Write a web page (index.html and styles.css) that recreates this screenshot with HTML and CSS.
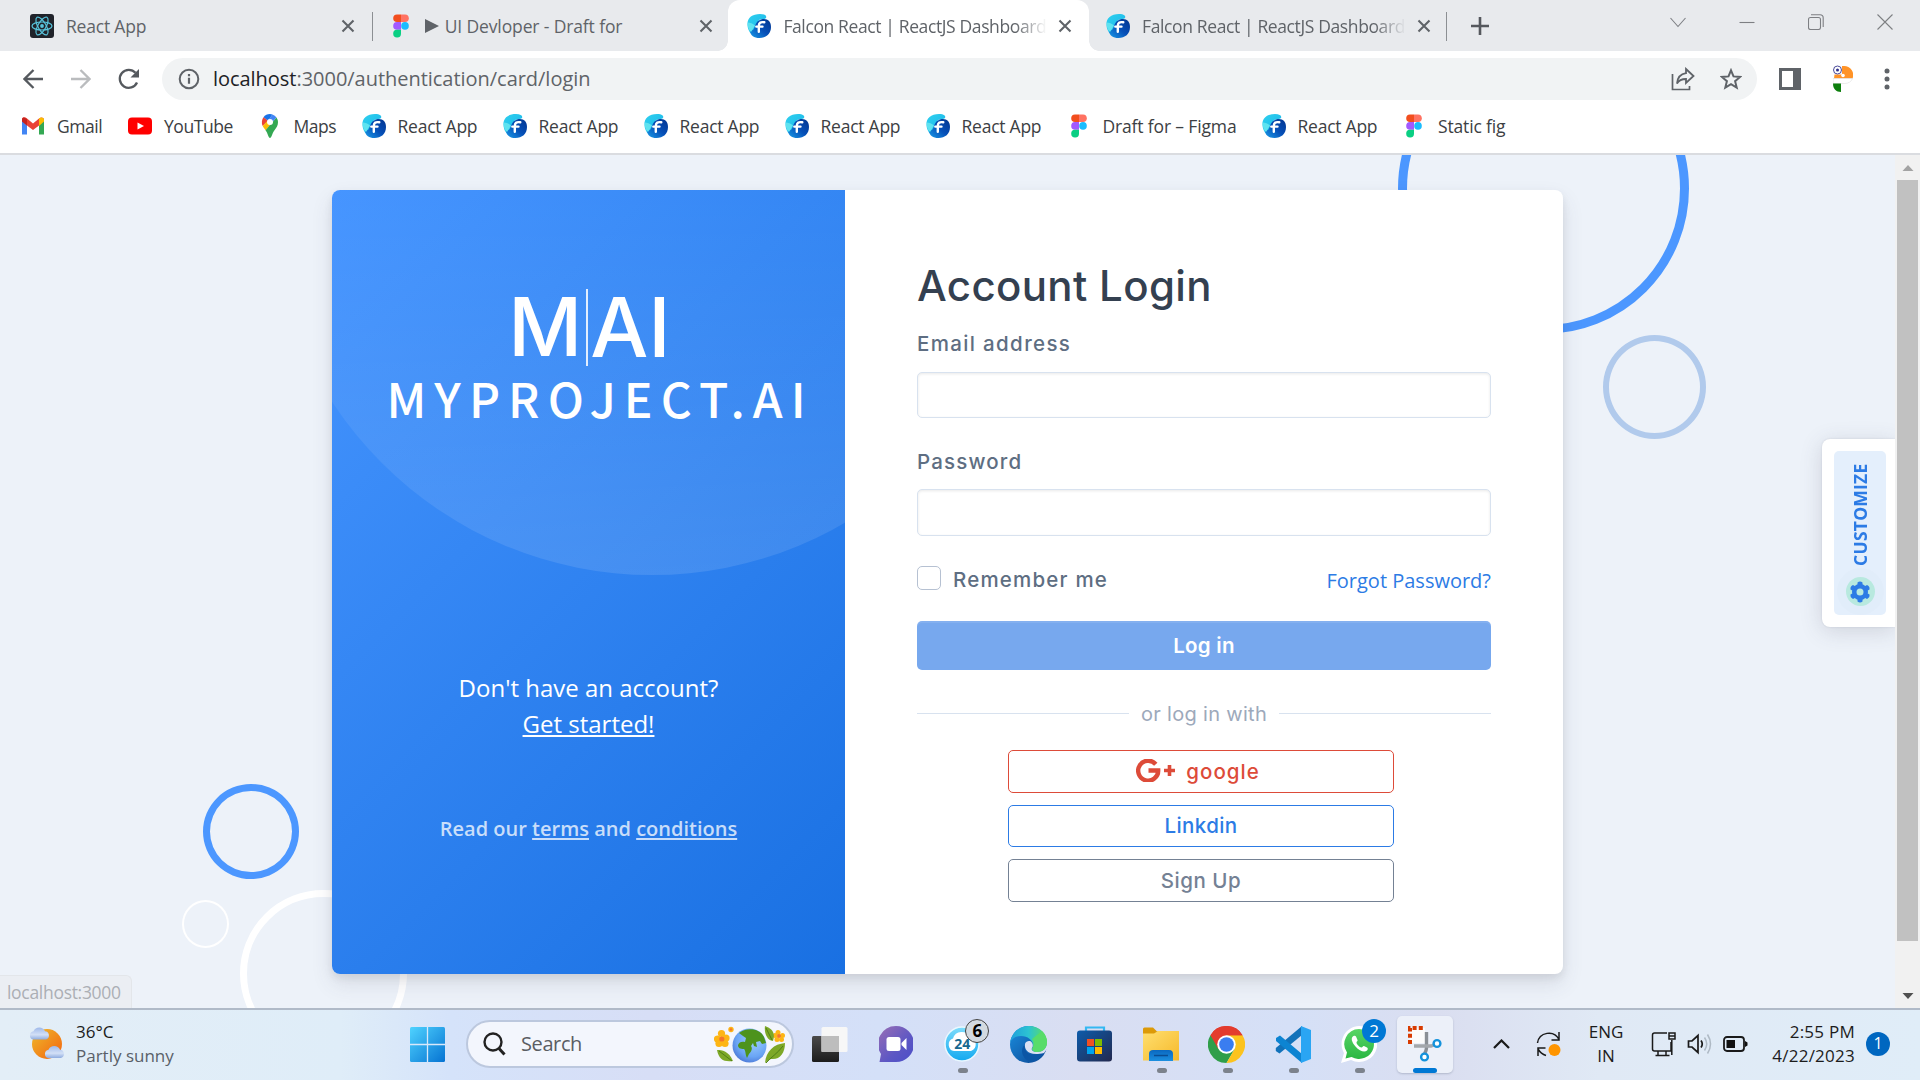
FILE: index.html
```html
<!DOCTYPE html>
<html lang="en">
<head>
<meta charset="utf-8">
<title>Falcon React | ReactJS Dashboard</title>
<link rel="stylesheet" href="styles.css">
</head>
<body>
<svg class="defs" width="0" height="0">
  <defs>
    <linearGradient id="fg-a" x1="0" y1="0" x2="1" y2="1"><stop offset="0" stop-color="#2fd0ee"/><stop offset="1" stop-color="#19b5ea"/></linearGradient>
    <linearGradient id="fg-b" x1="1" y1="0" x2="0" y2="1"><stop offset="0" stop-color="#02348f"/><stop offset=".5" stop-color="#0650b8"/><stop offset="1" stop-color="#1a9be8"/></linearGradient>
    <linearGradient id="win" x1="0" y1="0" x2="1" y2="1"><stop offset="0" stop-color="#4fd3ff"/><stop offset="1" stop-color="#0673d2"/></linearGradient>
    <linearGradient id="sun" x1="0" y1="0" x2="1" y2="1"><stop offset="0" stop-color="#eebb2c"/><stop offset="1" stop-color="#f4620e"/></linearGradient>
    <linearGradient id="cloud" x1="0" y1="0" x2="0" y2="1"><stop offset="0" stop-color="#9fb9ea"/><stop offset=".6" stop-color="#d3e0f6"/><stop offset="1" stop-color="#8facdf"/></linearGradient>
    <linearGradient id="chat" x1="0" y1="0" x2="1" y2="1"><stop offset="0" stop-color="#9b6fb4"/><stop offset=".6" stop-color="#5d57c4"/><stop offset="1" stop-color="#4a4ec8"/></linearGradient>
    <linearGradient id="sky" x1="0" y1="0" x2="0" y2="1"><stop offset="0" stop-color="#7edcfb"/><stop offset="1" stop-color="#12a9f0"/></linearGradient>
    <linearGradient id="edge-a" x1="0" y1="0" x2="1" y2="0"><stop offset="0" stop-color="#1f9fdc"/><stop offset=".5" stop-color="#2cc3d2"/><stop offset="1" stop-color="#5ee05a"/></linearGradient>
    <linearGradient id="edge-b" x1="0" y1="0" x2="1" y2="1"><stop offset="0" stop-color="#1b8fe0"/><stop offset="1" stop-color="#0c4591"/></linearGradient>
    <linearGradient id="store" x1="0" y1="0" x2="1" y2="1"><stop offset="0" stop-color="#0d5cab"/><stop offset="1" stop-color="#23294f"/></linearGradient>
    <linearGradient id="folder" x1="0" y1="0" x2="1" y2="1"><stop offset="0" stop-color="#ffdf70"/><stop offset="1" stop-color="#f6b92a"/></linearGradient>
    <linearGradient id="tray-blue" x1="0" y1="0" x2="0" y2="1"><stop offset="0" stop-color="#0a68c0"/><stop offset="1" stop-color="#1c8fe0"/></linearGradient>
    <linearGradient id="dark" x1="0" y1="0" x2="0" y2="1"><stop offset="0" stop-color="#4a4a4a"/><stop offset="1" stop-color="#1c1c1c"/></linearGradient>
    <radialGradient id="globe" cx=".6" cy=".35" r=".8"><stop offset="0" stop-color="#9fd0ff"/><stop offset=".6" stop-color="#6aa5f5"/><stop offset="1" stop-color="#3f63c8"/></radialGradient>
    <linearGradient id="wa" x1="0" y1="0" x2="0" y2="1"><stop offset="0" stop-color="#59d566"/><stop offset="1" stop-color="#2bb742"/></linearGradient>
  </defs>
  <symbol id="falcon" viewBox="0 0 24 24">
    <path d="M.5 11C0 4 5 0 13 0c5 0 7 2 6 4-1 1.500-4 .8-7 2l-4 9 1 7C4 21 .8 17 .5 11z" fill="url(#fg-a)"/>
    <path d="M14 5.500c6-1.500 10 1.500 10 7.500 0 7-5 11-11.500 11-5.500 0-9-2.500-9.500-7 3-.5 4-1.500 5-5 1-3.500 3-5.500 6-6.500z" fill="url(#fg-b)"/>
    <path d="M.8 8.500C3 8.500 6 9.500 8 11.500l-4 6.500C1.500 16 .2 12 .8 8.500z" fill="#5fe3f0"/>
    <path d="M17.300 8.300c-4-.8-5.500.8-5.500 3.800v5.700M9.300 12.600h6.200" fill="none" stroke="#fff" stroke-width="2.400" stroke-linecap="round"/>
  </symbol>
  <symbol id="figma" viewBox="0 0 24 24">
    <path d="M8 .5h4v7.600H8a3.800 3.800 0 0 1 0-7.600z" fill="#f24e1e"/><path d="M12 .5h4a3.800 3.800 0 0 1 0 7.600h-4z" fill="#ff7262"/>
    <path d="M8 8.100h4v7.600H8a3.800 3.800 0 0 1 0-7.600z" fill="#a259ff"/><circle cx="16" cy="11.900" r="3.800" fill="#1abcfe"/>
    <path d="M8 15.700h4v3.800a3.900 3.900 0 1 1-4-3.800z" fill="#0acf83"/>
  </symbol>
  <symbol id="close" viewBox="0 0 14 14"><path d="M1.500 1.500l11 11M12.500 1.500l-11 11" stroke="#5f6368" stroke-width="2.100"/></symbol>
</svg>

<div class="screen">
  <header class="tabs">
    <div class="tab">
      <svg class="fav" viewBox="0 0 24 24"><rect width="24" height="24" rx="3" fill="#20232a"/><g fill="none" stroke="#58c4dc" stroke-width="1.200"><ellipse cx="12" cy="12" rx="10" ry="4"/><ellipse cx="12" cy="12" rx="10" ry="4" transform="rotate(60 12 12)"/><ellipse cx="12" cy="12" rx="10" ry="4" transform="rotate(120 12 12)"/></g><circle cx="12" cy="12" r="1.900" fill="#58c4dc"/></svg>
      <span class="tab-title">React App</span><svg class="x"><use href="#close"/></svg>
    </div>
    <div class="tab divided">
      <svg class="fav"><use href="#figma"/></svg>
      <span class="tab-title figma-title"><svg width="14" height="14" viewBox="0 0 14 14"><path d="M0 0l14 7-14 7z" fill="#5f6368"/></svg>UI Devloper - Draft for</span><svg class="x"><use href="#close"/></svg>
    </div>
    <div class="tab active">
      <svg class="fav"><use href="#falcon"/></svg>
      <span class="tab-title long">Falcon React | ReactJS Dashboard</span><svg class="x"><use href="#close"/></svg>
    </div>
    <div class="tab">
      <svg class="fav"><use href="#falcon"/></svg>
      <span class="tab-title long">Falcon React | ReactJS Dashboard</span><svg class="x"><use href="#close"/></svg>
    </div>
    <div class="new-tab divided"><svg width="18" height="18" viewBox="0 0 18 18"><path d="M9 0v18M0 9h18" stroke="#55585d" stroke-width="2.600"/></svg></div>
    <div class="window-buttons">
      <svg width="16" height="16" viewBox="0 0 16 16"><path d="M.5 4L8 12.500 15.500 4"/></svg>
      <svg width="16" height="16" viewBox="0 0 16 16"><path d="M.5 8.500h15"/></svg>
      <svg width="16" height="16" viewBox="0 0 16 16"><rect x=".5" y="3.500" width="12" height="12" rx="2"/><path d="M3 .8h9a3.200 3.200 0 0 1 3.200 3.200v9"/></svg>
      <svg width="16" height="16" viewBox="0 0 16 16"><path d="M.5.5l15 15M15.500.5l-15 15"/></svg>
    </div>
  </header>

  <div class="toolbar">
    <div class="nav">
      <svg width="20" height="20" viewBox="0 0 20 20"><path d="M20 10H2M10.500 1L1.500 10l9 9" stroke="#55595e"/></svg>
      <svg width="20" height="20" viewBox="0 0 20 20"><path d="M0 10h18M9.500 1l9 9-9 9" stroke="#babcbe"/></svg>
      <svg width="22" height="22" viewBox="0 0 22 22"><path d="M19 14.500A9 9 0 1 1 17.500 4.800" stroke="#55595e"/><path d="M21 1v8.500h-8.500z" fill="#55595e"/></svg>
    </div>
    <div class="omnibox">
      <svg width="22" height="22" viewBox="0 0 22 22"><circle cx="11" cy="11" r="9.300" fill="none" stroke="#5f6368" stroke-width="2"/><path d="M11 9.700v6M11 6v2.200" stroke="#5f6368" stroke-width="2.200"/></svg>
      <span class="url"><b>localhost</b>:3000/authentication/card/login</span>
      <svg class="share" width="24" height="24" viewBox="0 0 24 24"><path d="M1.500 7v15.500h17V19" fill="none" stroke="#5f6368" stroke-width="1.700"/><path d="M15 2l7.500 7L15 16v-4c-4.500 0-7 1-9 4.500C6.500 10.500 9.500 7 15 6.200z" fill="none" stroke="#5f6368" stroke-width="1.800"/></svg>
      <svg width="22" height="22" viewBox="0 0 22 22"><path d="M11 2.300l2.500 6.100 6.600.5-5 4.300 1.600 6.400L11 16.100l-5.700 3.500 1.600-6.400-5-4.300 6.600-.5z" fill="none" stroke="#5f6368" stroke-width="2"/></svg>
    </div>
    <svg class="side" width="22" height="22" viewBox="0 0 22 22"><path fill-rule="evenodd" d="M0 0h22v22H0zM3 3v16h11V3z" fill="#5f6368"/></svg>
    <svg class="avatar" width="20" height="28" viewBox="0 0 20 28"><path d="M9 1h2a9 9 0 0 1 8.500 12.500H1l.5-4H9z" fill="#ff9327"/><path d="M0 13.500h19.500c-1 3-4 5-8 5H0z" fill="#fff" stroke="#ddd" stroke-width=".6"/><path d="M0 18.500h8V27c-5 0-8-3-8-8.500z" fill="#0d7f0d"/><circle cx="4.500" cy="5" r="4" fill="#fff" stroke="#4a4a9a" stroke-width="1"/><circle cx="4.500" cy="5" r="1.500" fill="#30308a"/><circle cx="10" cy="10.500" r="1.800" fill="#fff"/></svg>
    <svg width="6" height="22" viewBox="0 0 6 22"><g fill="#5f6368"><circle cx="3" cy="3" r="2.500"/><circle cx="3" cy="11" r="2.500"/><circle cx="3" cy="19" r="2.500"/></g></svg>
  </div>

  <nav class="bookmarks">
    <a><svg viewBox="0 0 24 24"><path d="M1 5.500v15h5V11z" fill="#4285f4"/><path d="M18 11v9.500h5v-15z" fill="#34a853"/><path d="M1 5.500C1 3 4 2.500 6 4.500l6 5 6-5c2-2 5-1 5 1V7l-5 4.500-6 4.500-6-4.500L1 7z" fill="#ea4335"/><path d="M18 4.500c2-2 5-1 5 1V7.500L18 12z" fill="#fbbc04"/><path d="M1 5.500C1 4 2 3.500 3 3.500L6 5v6.500L1 7.500z" fill="#c5221f"/></svg>Gmail</a>
    <a><svg viewBox="0 0 24 24"><rect y="3.500" width="24" height="17" rx="4" fill="#f00"/><path d="M9.500 8.500l6.500 3.500-6.500 3.500z" fill="#fff"/></svg>YouTube</a>
    <a><svg viewBox="0 0 24 24"><path d="M12 0a8 8 0 0 0-6.500 3.300L10 7l4.500-6.500z" fill="#1a73e8"/><path d="M5.500 3.300A8.500 8.500 0 0 0 4.700 12L10 6.800z" fill="#ea4335"/><path d="M14.500.5L9 7.800 12 11l6.500-7.500A8 8 0 0 0 14.500.5z" fill="#4285f4"/><path d="M4.700 12c.6 1.500 1.800 2.700 2.800 4.200L15 8 9.500 6.800z" fill="#fbbc04"/><path d="M7.500 16.200c2.500 3.300 3 7.800 4.500 7.800s2-4.500 4.500-7.800C18.500 13.500 20 12 20 8a9 9 0 0 0-1.500-4.500z" fill="#34a853"/><circle cx="12" cy="8" r="3" fill="#fff"/></svg>Maps</a>
    <a><svg><use href="#falcon"/></svg>React App</a>
    <a><svg><use href="#falcon"/></svg>React App</a>
    <a><svg><use href="#falcon"/></svg>React App</a>
    <a><svg><use href="#falcon"/></svg>React App</a>
    <a><svg><use href="#falcon"/></svg>React App</a>
    <a class="wide"><svg><use href="#figma"/></svg>Draft for – Figma</a>
    <a><svg><use href="#falcon"/></svg>React App</a>
    <a class="wide"><svg><use href="#figma"/></svg>Static fig</a>
  </nav>

  <main class="viewport">
    <div class="page">
      <i class="ring ring-top"></i><i class="ring ring-pale"></i><i class="ring ring-blue"></i><i class="ring ring-dot"></i><i class="ring ring-white"></i>
      <section class="card">
        <div class="brand">
          <div class="logo"><span>M</span><i></i><span>AI</span></div>
          <div class="logo-name">MYPROJECT.AI</div>
          <p class="join">Don't have an account?<br><a>Get started!</a></p>
          <p class="terms">Read our <a>terms</a> and <a>conditions</a></p>
        </div>
        <form class="login">
          <h3>Account Login</h3>
          <label class="f-email">Email address</label>
          <div class="input"></div>
          <label class="f-pass">Password</label>
          <div class="input pass"></div>
          <div class="options"><span class="check"></span><span class="remember">Remember me</span><a>Forgot Password?</a></div>
          <div class="submit">Log in</div>
          <div class="or"><span>or log in with</span></div>
          <div class="social">
            <div class="btn google"><svg width="39" height="23" viewBox="0 0 39 23"><path d="M19.800 5.200A10 10 0 1 0 22.200 11.500H12.500" fill="none" stroke="#dd4b39" stroke-width="4.400"/><path d="M33.500 6v11M28 11.500h11" stroke="#dd4b39" stroke-width="3.600"/></svg><span>google</span></div>
            <div class="btn linkedin"><span>Linkdin</span></div>
            <div class="btn signup"><span>Sign Up</span></div>
          </div>
        </form>
      </section>
      <aside class="customize"><div><span>CUSTOMIZE</span><i><svg width="22" height="22" viewBox="0 0 22 22"><g fill="#2c7be5"><path fill-rule="evenodd" d="M11 3a8 8 0 1 0 0 16 8 8 0 0 0 0-16zm0 4.500a3.500 3.500 0 1 1 0 7 3.500 3.500 0 0 1 0-7z"/><path id="tooth" d="M8.500 4V1.500Q11-.5 13.500 1.500V4z"/><use href="#tooth" transform="rotate(60 11 11)"/><use href="#tooth" transform="rotate(120 11 11)"/><use href="#tooth" transform="rotate(180 11 11)"/><use href="#tooth" transform="rotate(240 11 11)"/><use href="#tooth" transform="rotate(300 11 11)"/></g></svg></i></div></aside>
      <div class="status">localhost:3000</div>
    </div>
    <div class="scrollbar">
      <svg width="24" height="25" viewBox="0 0 24 25"><path d="M6.500 16L12 10l5.500 6z" fill="#a3a3a3"/></svg>
      <i></i>
      <svg width="24" height="25" viewBox="0 0 24 25"><path d="M6.500 10L12 16l5.500-6z" fill="#505050"/></svg>
    </div>
  </main>

  <footer class="taskbar">
    <div class="weather">
      <svg width="37" height="34" viewBox="0 0 37 34"><circle cx="18" cy="18" r="15" fill="url(#sun)"/><path d="M4 13.500a4.200 4.200 0 0 1 .5-8.200 6.300 6.300 0 0 1 11.500 0 4.200 4.200 0 0 1 1 8.200z" fill="url(#cloud)"/><path d="M19 32a4.200 4.200 0 0 1 .5-8.200 6.300 6.300 0 0 1 11.500 0 4.200 4.200 0 0 1 1 8.200z" fill="url(#cloud)"/></svg>
      <div>36°C<br><em>Partly sunny</em></div>
    </div>
    <svg class="start" width="35" height="35" viewBox="0 0 35 35"><rect width="35" height="35" rx="1.500" fill="url(#win)"/><path d="M17.500 0v35M0 17.500h35" stroke="#d8e8fa" stroke-width="1.300"/></svg>
    <div class="search">
      <svg width="23" height="24" viewBox="0 0 23 24"><circle cx="10" cy="10" r="8.500" fill="none" stroke="#222" stroke-width="2.400"/><path d="M16 16.500l5.500 6" stroke="#222" stroke-width="3"/></svg>
      <span>Search</span>
      <svg class="earth" width="72" height="38" viewBox="0 0 72 38">
        <g fill="#fdb515"><circle cx="7.500" cy="8.500" r="3.600"/><circle cx="3.500" cy="14" r="3.600"/><circle cx="12" cy="13" r="3.600"/><circle cx="5" cy="18.500" r="3.600"/><circle cx="11" cy="18.500" r="3.600"/><circle cx="17" cy="4.500" r="2.700"/><circle cx="64" cy="7.500" r="2.500"/><circle cx="61" cy="10.500" r="2.500"/><circle cx="68.500" cy="10.500" r="2.500"/><circle cx="63" cy="14.500" r="2.500"/><circle cx="67.500" cy="14.500" r="2.500"/></g>
        <g fill="#f4772a"><circle cx="7.800" cy="14" r="2.600"/><circle cx="17" cy="4.500" r="1.300"/><circle cx="65" cy="11" r="2"/></g>
        <path d="M3 25c5 0 12 1 16 11C10 37 5 35 3 25zM51 1c6 2 11 6 8 15-6-1-9-8-8-15zM71 18c0 10-5 17-14 16-3 1-4 3-6 4 1-12 9-19 20-20z" fill="#7da827"/>
        <path d="M5 26l13 10M52 38c4-5 12-10 17-17M52 3l6 12" stroke="#4f7f16" fill="none"/>
        <circle cx="35.500" cy="20.500" r="17" fill="url(#globe)"/>
        <path d="M25 8C32 2 46 3 50 12l2 6-4 1-2-3-4 1 1 5-3-1-1-3-2 3c2 3 0 6-2 8l-2 4c-2-4-1-7-3-9-4 0-6-1-6-4 1-3 4-4 7-3l1-4-3-2z" fill="#4d931c"/>
      </svg>
    </div>
    <div class="apps">
      <div class="app"><svg width="36" height="36" viewBox="0 0 36 36"><rect y="10" width="27" height="26" rx="1.500" fill="url(#dark)"/><rect x="9.500" y="1" width="26" height="25" rx="1.500" fill="#f7f7f7"/><path d="M9.500 10H27v16H9.500z" fill="#bdbdbd"/></svg></div>
      <div class="app"><svg width="34" height="36" viewBox="0 0 34 36"><path d="M17 0a17 17 0 0 1 0 36H.5l1.500-8A18 18 0 0 1 17 0z" fill="url(#chat)"/><rect x="7.500" y="11" width="14" height="14" rx="2.500" fill="#fff"/><path d="M22.500 17l5-5v12l-5-5z" fill="#fff"/></svg></div>
      <div class="app open"><svg width="36" height="36" viewBox="0 0 36 36"><circle cx="18" cy="18" r="17" fill="url(#sky)" stroke="#eaf8ff" stroke-width="1.500"/><path d="M10 25a6.500 6.500 0 0 1-1-12.500 9 9 0 0 1 17-1A7 7 0 0 1 27 25z" fill="#fff"/></svg><span class="count24">24</span><b class="badge grey">6</b></div>
      <div class="app"><svg width="37" height="37" viewBox="0 0 37 37"><circle cx="18.500" cy="18.500" r="18.500" fill="url(#edge-b)"/><path d="M0 17C2 5 10 0 19 0c10 0 18 7 18 16 0 7-5 10-10 10-4 0-5-1.500-5-3 0-1 1.500-2 1-5-.6-3.500-5-8-12-8C6 10 2 12 0 17z" fill="url(#edge-a)"/><path d="M15 18c-2 7 4 15 19 9-2 4-7 8-13 9-8-2-12-12-6-18z" fill="#0c56a5"/><path d="M15 18c-1 5 3 13 19 9l3-4v-7c0 7-5 10-10 10-4 0-6-2-5-4 1.500-1.500 1-5-1-6.500-2-1-5-.5-6 2.500z" fill="#dbe1f3"/><path d="M22.500 22c-.8 2 1 4 4.500 4 5 0 10-3 10-10 0-4-2-8-5-11L22 13c1.500 2 2.500 6 .5 9z" fill="#58dc6a"/></svg></div>
      <div class="app"><svg width="36" height="36" viewBox="0 0 36 36"><path d="M9 6V1.500h18V6" fill="none" stroke="#34b8f2" stroke-width="2.200"/><rect y="4.500" width="35" height="31" rx="3" fill="url(#store)"/><path d="M10 13h7v7h-7z" fill="#f25022"/><path d="M18 13h7v7h-7z" fill="#7fba00"/><path d="M10 21h7v7h-7z" fill="#00a4ef"/><path d="M18 21h7v7h-7z" fill="#ffb900"/></svg></div>
      <div class="app open"><svg width="36" height="34" viewBox="0 0 36 34"><path d="M0 12V2Q0 .5 1.500.5H10l4 4H32V12z" fill="#dc9a08"/><path d="M0 6.500h11l4-2.500h21v29.500H0z" fill="url(#folder)"/><path d="M6 34v-7q0-4 4-4h16q4 0 4 4v7z" fill="url(#tray-blue)"/><path d="M11 28.500h14" stroke="#0a4c92" stroke-width="1.500"/></svg></div>
      <div class="app open"><svg width="37" height="37" viewBox="0 0 48 48"><path d="M24 24L3.200 12A24 24 0 0 1 44.800 12z" fill="#e33b2e"/><path d="M3.200 12A24 24 0 0 0 24 48L34.400 30 24 24z" fill="#2f9e4a"/><path d="M44.800 12A24 24 0 0 1 24 48l10.400-18L24 12z" fill="#fcc31e"/><path d="M3.200 12L13.600 30l2.400-13 8-5h20.800A24 24 0 0 0 3.200 12z" fill="#e33b2e"/><circle cx="24" cy="24" r="12" fill="#fff"/><circle cx="24" cy="24" r="9.500" fill="#3a7df0"/></svg></div>
      <div class="app open"><svg width="36" height="37" viewBox="0 0 36 37"><path d="M27 0v9L4.500 27.500.8 25v-3z" fill="#1272ba"/><path d="M27 28L5 9.500 1 12v3L27 37z" fill="#0d84d2"/><path d="M26 0l10 4v29l-10 4z" fill="#2aa5f3"/></svg></div>
      <div class="app open"><svg width="36" height="37" viewBox="0 0 36 37"><path d="M18 0a18 18 0 1 1-8 34L0 37l3-10A18 18 0 0 1 18 0z" fill="#fff"/><path d="M18 3a15 15 0 1 1-7.500 28L4.500 32.500l1.500-6A15 15 0 0 1 18 3z" fill="url(#wa)"/><path d="M12.500 10c-3 1.500-2 6 2 10.500s9 6.500 11.500 4c1-1 1-2.500 0-3l-3-1.500c-1-.4-1.500 1.500-2.500 1.500-2 0-5-3.500-5-5 0-1 1.500-1.200 1-2.500l-1.500-3.500c-.5-1-1.700-.9-2.500-.5z" fill="#fff"/></svg><b class="badge blue">2</b></div>
      <div class="app current"><svg width="34" height="36" viewBox="0 0 34 36"><path d="M2 2h15v15H2z" fill="#fbfbfb"/><path d="M2 18V2h15" fill="none" stroke="#d83b01" stroke-width="4" stroke-dasharray="4 2.200"/><path d="M18.500 6v16q0 2-2 6" fill="none" stroke="#8a8f95" stroke-width="3.400"/><path d="M6 20h17l3-1" fill="none" stroke="#a3a7ac" stroke-width="3.400"/><circle cx="29" cy="17.500" r="3.400" fill="#fff" stroke="#1492dc" stroke-width="2.400"/><circle cx="16.500" cy="31" r="3.400" fill="#fff" stroke="#1492dc" stroke-width="2.400"/></svg></div>
    </div>
    <div class="tray">
      <svg width="17" height="10" viewBox="0 0 17 10"><path d="M1 9l7.500-7.500L16 9" stroke-width="2.200"/></svg>
      <svg class="sync" width="25" height="26" viewBox="0 0 25 26"><path d="M1.500 12C3 1 18-1.500 23 8.500M23 1v8h-7.500M10 24.500Q5 23 2 18M2 25v-8h7.500" stroke-width="1.500"/><circle cx="18.500" cy="19" r="6" fill="#ff9500" stroke="none"/></svg>
      <div class="lang">ENG<br>IN</div>
      <svg class="net" width="25" height="26" viewBox="0 0 25 26"><path d="M16 2H3.500Q1.500 2 1.500 4v14q0 2 2 2H20v-9M7 20v4.500M15 20v4.500M4.500 24.500h14M18 2h6v6h-6zM18 5h6M20.800 9v15" stroke-width="1.500"/></svg>
      <svg class="vol" width="25" height="22" viewBox="0 0 25 22"><path d="M1.500 8H5l6-5.500v17L5 14H1.500zM14 7.500q2.500 3.500 0 7" stroke-width="1.700"/><path d="M17.500 4.500q4.500 6.500 0 13M20.500 1.500q6 9.500 0 19" stroke="#aeb9c4" stroke-width="1.500"/></svg>
      <svg class="bat" width="25" height="16" viewBox="0 0 25 16"><rect x="1" y="1" width="20" height="14" rx="3" stroke-width="1.800"/><path d="M3.500 4h8.500v8H3.500zM22 5l2.500 1.500v3L22 11z" fill="#111" stroke="none"/></svg>
      <div class="clock">2:55 PM<br>4/22/2023</div>
      <b class="notice">1</b>
    </div>
  </footer>
</div>
</body>
</html>
```
FILE: styles.css
```css
* { box-sizing: border-box; }
body { margin: 0; font-family: "Open Sans", "Noto Sans", sans-serif; overflow: hidden; }
p, h3 { margin: 0; }
svg { display: block; flex: none; }
.defs { position: absolute; }
.screen { width: 1920px; height: 1080px; display: flex; flex-direction: column; background: #fff; }

/* Browser tabs */
.tabs { height: 51px; flex: none; display: flex; padding-left: 13px; background: #e8eaed; }
.tab { width: 358.700px; flex: none; height: 51px; display: flex; align-items: center; padding: 0 18px 0 17px; color: #5f6368; font-size: 17.500px; letter-spacing: -.2px; position: relative; }
.fav { width: 24px; height: 24px; }
.tab-title { flex: 1; margin: 0 0 0 12px; white-space: nowrap; overflow: hidden; line-height: 30px; }
.figma-title { display: flex; align-items: center; gap: 6px; letter-spacing: -.13px; }
.tab-title.long { letter-spacing: -.38px; -webkit-mask-image: linear-gradient(90deg, #000 232px, transparent 264px); mask-image: linear-gradient(90deg, #000 232px, transparent 264px); }
.x { width: 14px; height: 14px; margin-left: 12px; margin-right: -1px; }
.divided::before { content: ""; position: absolute; left: 0; top: 12px; width: 1.500px; height: 29px; background: #8c8f93; }
.tab.active { background: #fff; border-radius: 12px 12px 0 0; margin-left: -2px; padding-left: 19px; width: 360.700px; }
.tab.active::before, .tab.active::after { content: ""; position: absolute; bottom: 0; width: 10px; height: 10px; }
.tab.active::before { left: -10px; background: radial-gradient(circle at 0 0, transparent 9.500px, #fff 10px); }
.tab.active::after { right: -10px; background: radial-gradient(circle at 100% 0, transparent 9.500px, #fff 10px); z-index: 1; }
.new-tab { position: relative; width: 68px; display: flex; align-items: center; justify-content: center; margin-left: -2px; }
.window-buttons { margin-left: auto; display: flex; gap: 53px; padding: 14px 27px 0 0; }
.window-buttons svg { fill: none; stroke: #7d7f83; stroke-width: 1.100; }

/* Toolbar */
.toolbar { height: 54px; flex: none; display: flex; align-items: center; padding: 1px 30px 0 23px; }
.nav { width: 139px; display: flex; gap: 28px; align-items: center; }
.nav path[stroke] { fill: none; stroke-width: 2.300; }
.nav svg:last-child { margin-left: -1px; }
.omnibox { width: 1596px; height: 42px; border-radius: 21px; background: #f1f3f4; display: flex; align-items: center; padding: 0 15px 0 16px; }
.url { margin-left: 13px; font-size: 20px; letter-spacing: -.03px; line-height: 28px; color: #5f6368; flex: 1; }
.url b { font-weight: 400; color: #202124; }
.share { margin-right: 25px; }
.side { margin-left: 22px; }
.avatar { margin: 0 31px 0 32px; }

/* Bookmarks */
.bookmarks { height: 50px; flex: none; display: grid; grid-template-columns: 107px 129.500px 104px repeat(5, 141px) 195px 140.500px 110px; padding: 0 0 7px 21px; border-bottom: 2px solid #dadce0; }
.bookmarks a { display: flex; align-items: center; gap: 12px; font-size: 17.500px; letter-spacing: -.24px; color: #3c4043; white-space: nowrap; }
.bookmarks a:nth-child(-n+3) { letter-spacing: -.45px; }
.bookmarks a.wide { letter-spacing: -.15px; }
.bookmarks svg { width: 24px; height: 24px; }

/* Page */
.viewport { height: 853px; flex: none; display: flex; }
.page { width: 1895px; position: relative; overflow: hidden; background: #edf2f9; padding: 35px 0 0 332px; }
.ring { position: absolute; border-radius: 50%; border: 9px solid #4c97ff; }
.ring-top { left: 1398px; top: -112px; width: 291px; height: 291px; }
.ring-pale { left: 1603px; top: 179.500px; width: 103px; height: 104px; border: 6px solid #b1caec; }
.ring-blue { left: 203px; top: 629px; width: 96px; height: 95px; border-width: 7.500px; }
.ring-dot { left: 182px; top: 745px; width: 47px; height: 48px; border: 2.500px solid #fff; }
.ring-white { left: 240px; top: 734.500px; width: 167px; height: 167px; border: 7.500px solid #fff; }
.card { position: relative; width: 1231px; height: 784px; display: flex; border-radius: 8px; background: #fff; box-shadow: 0 10px 21px rgba(65, 69, 88, .12), 0 4px 9px rgba(0, 0, 0, .08); }
.brand { width: 513px; flex: none; padding-top: 99px; display: flex; flex-direction: column; align-items: center; border-radius: 8px 0 0 8px; color: #fff; text-align: center;
  background: radial-gradient(circle 381px at 320px 4px, #fff 380px, transparent 381px) 0 0 / 0 0 no-repeat, linear-gradient(135deg, #4695ff 0%, #1970e2 100%); position: relative; }
.brand::before { content: ""; position: absolute; left: 0; top: 0; width: 513px; height: 385px; border-radius: 8px 0 0 0; background: linear-gradient(180deg, rgba(255, 255, 255, 0) 0, rgba(255, 255, 255, .11) 385px); clip-path: circle(382px at 320px 3px); }
.brand > * { position: relative; }
.logo { height: 77px; display: flex; font: 500 82px/77px "Inter", sans-serif; padding-left: 2px; }
.logo span:first-child { font-size: 81px; }
.logo i { width: 2px; height: 77px; background: rgba(255, 255, 255, .85); margin: 0 2px 0 4px; }
.logo-name { margin: 7px 0 0 23px; height: 48px; font: 500 48px/48px "Noto Sans CJK JP", sans-serif; letter-spacing: 8.050px; white-space: nowrap; }
.join { margin-top: 249px; font-size: 24px; line-height: 36px; }
.join a, .terms a { text-decoration: underline; text-decoration-thickness: 2px; text-underline-offset: 2px; text-decoration-skip-ink: none; }
.terms { margin-top: 72px; font-size: 20px; line-height: 30px; font-weight: 600; color: rgba(255, 255, 255, .75); }

.login { flex: 1; padding: 69px 72px 0; display: flex; flex-direction: column; font-family: "Inter", sans-serif; font-size: 20.500px; line-height: 30px; font-weight: 500; color: #5e6e82; }
.login h3 { font-size: 42px; line-height: 54px; font-weight: 500; letter-spacing: .35px; color: #344050; margin-bottom: 16px; }
.f-email { letter-spacing: 1.350px; margin-bottom: 13px; }
.f-pass { letter-spacing: 1.150px; margin: 29px 0 12px; }
.input { height: 46px; border: 1px solid #d8e2ef; border-radius: 5px; box-shadow: inset 0 1px 3px rgba(0, 0, 0, .09); }
.input.pass { height: 47px; }
.options { margin-top: 29px; height: 30px; display: flex; align-items: center; }
.check { width: 24px; height: 24px; margin-top: -4px; border: 1px solid #b6c1d2; border-radius: 5px; }
.remember { margin-left: 12px; letter-spacing: 1.200px; flex: 1; }
.options a { font: 400 20px/30px "Open Sans", sans-serif; color: #2c7be5; margin-top: 2px; }
.submit { margin-top: 26px; height: 49px; border-radius: 5px; background: #77a8ee; box-shadow: inset 0 2px 0 rgba(255, 255, 255, .1); color: #fff; font-weight: 600; line-height: 50px; text-align: center; letter-spacing: .25px; }
.or { margin-top: 28px; height: 30px; display: flex; align-items: center; font-size: 20px; font-weight: 400; color: #9da9bb; letter-spacing: .32px; }
.or::before, .or::after { content: ""; flex: 1; height: 1px; background: #d8e2ef; }
.or span { margin: 2px 12px 0; }
.social { margin: 22px 97px 0 91px; display: flex; flex-direction: column; gap: 12px; }
.btn { height: 43px; border: 1.500px solid; border-radius: 5px; display: flex; align-items: center; justify-content: center; }
.google { color: #dd4b39; gap: 11px; letter-spacing: 1px; padding-right: 6px; }
.google svg { margin-top: -2px; }
.linkedin { height: 42px; color: #2c7be5; letter-spacing: .4px; }
.signup { color: #748194; letter-spacing: .5px; }

.customize { position: absolute; left: 1822px; top: 284px; width: 73px; height: 188px; padding: 12px 9px 12px 12px; background: #fff; border-radius: 8px 0 0 8px; box-shadow: 0 4px 22px rgba(65, 69, 88, .18), 0 0 2px rgba(65, 69, 88, .15); }
.customize div { height: 100%; border-radius: 5px; background: #e4effc; display: flex; flex-direction: column; align-items: center; padding-top: 12px; gap: 11px; }
.customize span { writing-mode: vertical-rl; transform: rotate(180deg); font-size: 17.500px; font-weight: 700; letter-spacing: .250px; line-height: 24px; height: 103px; color: #2c7be5; }
.customize i { width: 29px; height: 29px; border-radius: 50%; background: #b8e9df; display: flex; align-items: center; justify-content: center; box-shadow: 0 0 0 9px rgba(0, 60, 120, .012); }
.status { position: absolute; left: 0; bottom: 0; width: 132px; height: 33px; padding-left: 7px; border: 1px solid #e3e6ea; border-width: 1px 1px 0 0; border-radius: 0 6px 0 0; background: #ebeef3; color: #abafb5; font-size: 17.500px; letter-spacing: -.3px; line-height: 33px; }
.scrollbar { width: 25px; background: #f1f1f1; padding-left: 1px; display: flex; flex-direction: column; }
.scrollbar i { width: 21px; height: 762px; background: #c1c1c1; margin: 0 0 42px 1px; }

/* Taskbar */
.taskbar { height: 72px; flex: none; display: flex; align-items: center; border-top: 2px solid #b0bac8; font-size: 17px; line-height: 24px; color: #1c1c1c;
  background: linear-gradient(90deg, #e3eef7 0, #dfedf8 340px, #d5e3fa 450px, #d7def6 650px, #d4e0f8 880px, #d9def2 1080px, #d5e0f7 1290px, #dadef0 1440px, #e0e9f5 1600px, #e0edf8 1920px); }
.weather { width: 410px; padding-left: 29px; display: flex; align-items: center; gap: 10px; }
.weather svg { margin-top: -5px; }
.weather div, .lang, .clock { margin-top: -3px; }
.weather em { font-style: normal; color: #5a6068; }
.start { margin-top: -1px; }
.search { width: 328px; height: 48px; margin: -2px 0 0 21px; border-radius: 24px; border: 2px solid #bcc8de; background: #f3f6fd; display: flex; align-items: center; padding: 0 6px 0 15px; font-size: 20px; letter-spacing: -.4px; color: #5a5d63; }
.search span { margin-left: 15px; flex: 1; }
.apps { display: flex; margin-left: 3px; }
.app { position: relative; width: 66.150px; height: 70px; display: flex; align-items: center; justify-content: center; padding-bottom: 2px; }
.open::after { content: ""; position: absolute; bottom: 7px; left: 29px; width: 10px; height: 5px; border-radius: 3px; background: #7c828c; }
.count24 { position: absolute; left: 22px; top: 22px; width: 22px; text-align: center; font-size: 14px; font-weight: 700; color: #17688f; }
.badge { position: absolute; left: 36px; top: 9px; width: 24px; height: 24px; border-radius: 50%; text-align: center; line-height: 23px; font-size: 17px; font-weight: 400; }
.badge.grey { border: 1.500px solid #444; background: #d3dae1; color: #000; font-weight: 700; line-height: 21px; }
.badge.blue { background: #0078d4; color: #fff; }
.current::before { content: ""; position: absolute; left: 5px; top: 6px; width: 56px; height: 57px; border-radius: 5px; background: #ecf0f9; box-shadow: 0 1px 2px rgba(60, 70, 100, .25); }
.current::after { content: ""; position: absolute; left: 21px; top: 58px; width: 24px; height: 5px; border-radius: 3px; background: #0078d4; }
.current svg { position: relative; }
.tray { margin-left: auto; display: flex; align-items: center; padding-right: 30px; }
.tray svg { fill: none; stroke: #1a1a1a; margin-top: -2px; }
.sync { margin-left: 26px; }
.lang { width: 40px; margin-left: 25px; text-align: center; }
.net { margin-left: 25px; }
.vol { margin-left: 11px; }
.bat { margin-left: 11px; }
.clock { width: 107px; text-align: right; letter-spacing: .25px; }
.notice { width: 24px; height: 24px; margin: -2px 0 0 11px; border-radius: 50%; background: #0067c0; color: #fff; font-weight: 400; font-size: 16px; text-align: center; line-height: 23px; }
```
